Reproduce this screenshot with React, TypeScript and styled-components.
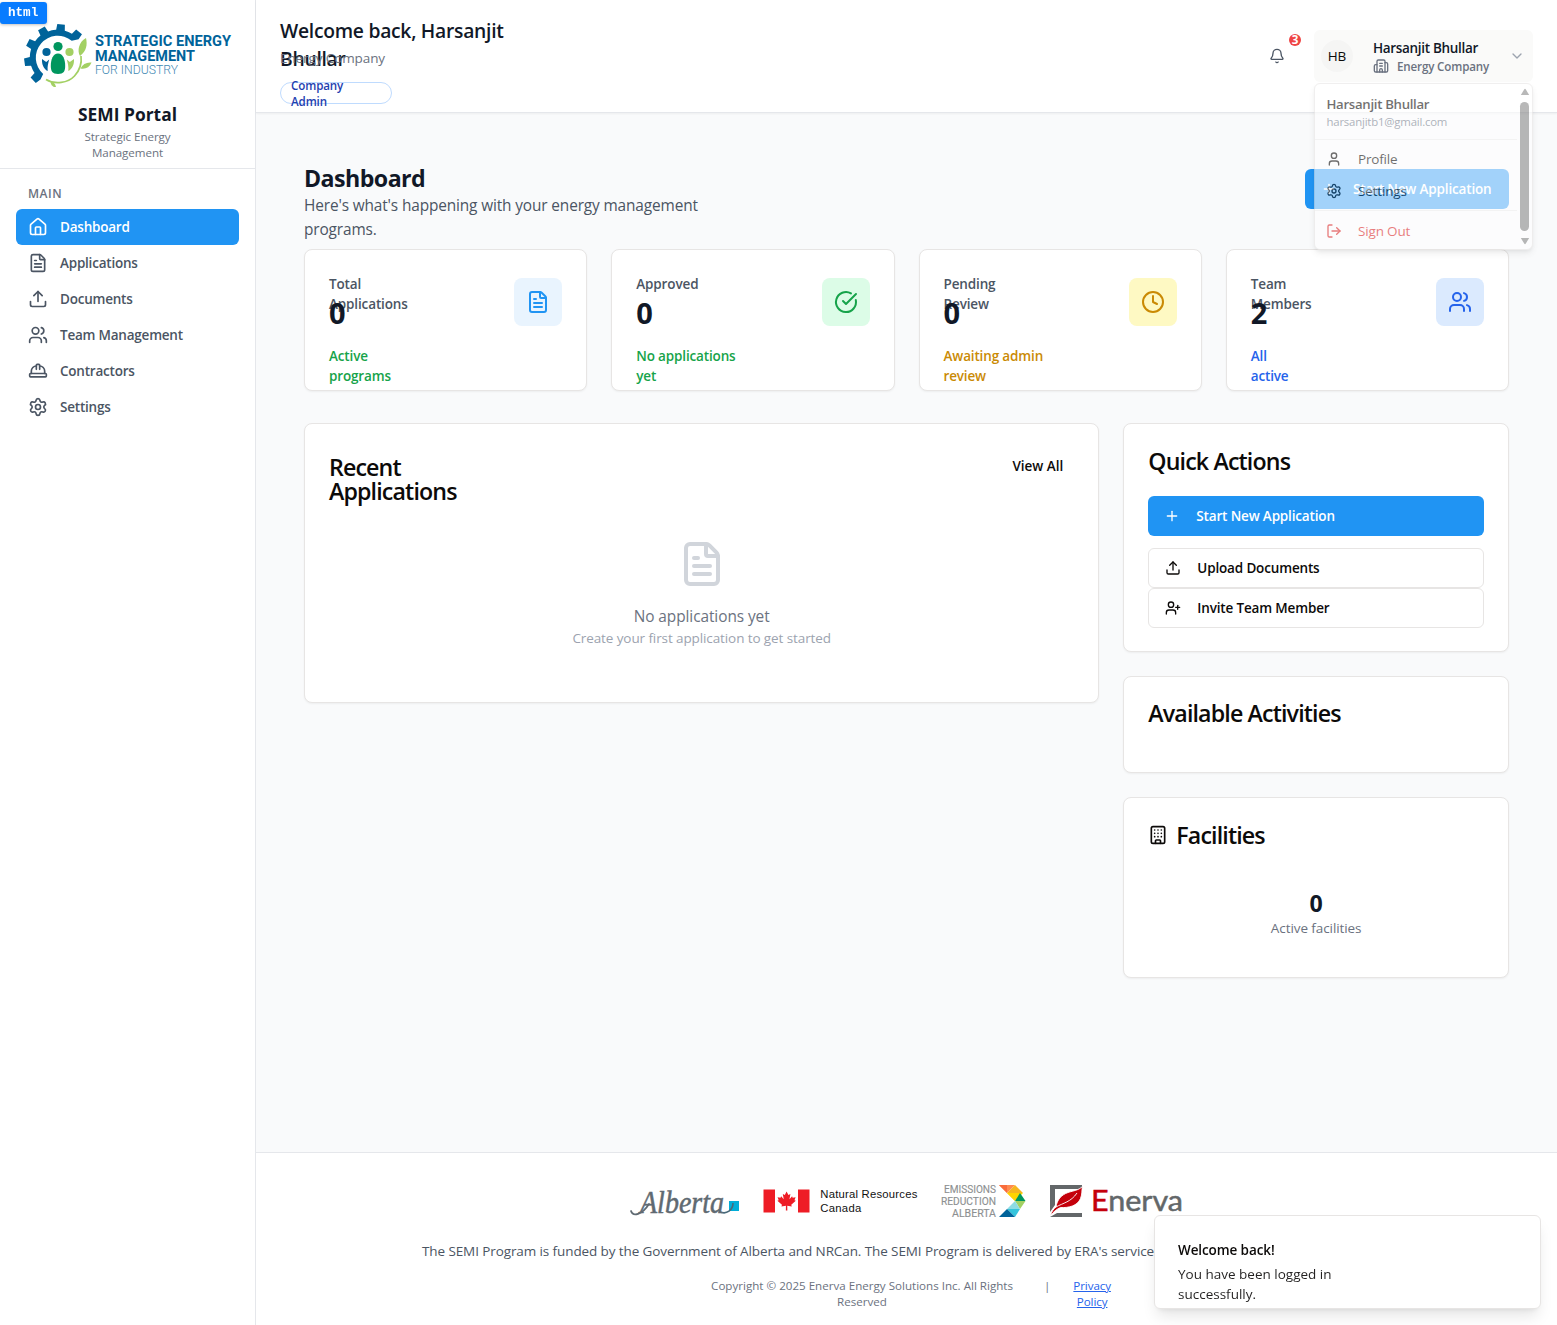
import React from "react";
import styled, { createGlobalStyle, css } from "styled-components";
import {
  Bell, Building, Building2, ChevronDown, CircleCheckBig, Clock, FileText, HardHat,
  House, LogOut, Plus, Settings, Upload, User, UserPlus, Users,
} from "lucide-react";

const sans = `"Open Sans", "Noto Sans", sans-serif`;

const type = (size: number, line: number, weight = 400, spacing = 0) => css`
  font-size: ${size}px;
  line-height: ${line}px;
  font-weight: ${weight};
  letter-spacing: ${spacing}px;
`;

const GlobalStyle = createGlobalStyle`
  *, *::before, *::after { box-sizing: border-box; }
  body { margin: 0; background: #f9fafb; font-family: ${sans}; color: #0c0a09; }
  h1, h2, h3, p { margin: 0; }
  button { font-family: inherit; border: 0; background: none; padding: 0; text-align: left; color: inherit; }
  svg { display: block; flex-shrink: 0; overflow: visible; }
`;

const Shell = styled.div`
  display: flex;
  height: 1325px;
  overflow: hidden;
`;

/* Sidebar */
const Sidebar = styled.aside`
  width: 256px;
  flex-shrink: 0;
  background: #fff;
  border-right: 1px solid #e5e7eb;
`;
const Brand = styled.div`
  height: 169px;
  padding: 22px 0 0;
  display: flex;
  flex-direction: column;
  align-items: center;
  border-bottom: 1px solid #e5e7eb;
  text-align: center;
`;
const BrandName = styled.h1`
  ${type(17.4, 28, 700)}
  color: #111827;
  margin: 10px 0 1px;
`;
const BrandSub = styled.p`
  ${type(11.6, 16, 400, -0.05)}
  color: #6b7280;
`;
const Nav = styled.nav`
  padding: 17px 16px 16px;
  display: flex;
  flex-direction: column;
`;
const NavLabel = styled.div`
  ${type(12, 16, 600, 0.5)}
  color: #6b7280;
  padding-left: 12px;
  margin-bottom: 7px;
`;
const NavItem = styled.a<{ $active?: boolean }>`
  ${type(13.5, 20, 600, -0.22)}
  display: flex;
  align-items: center;
  gap: 12px;
  height: 36px;
  padding: 0 12px;
  border-radius: 6px;
  color: ${(p) => (p.$active ? "#fff" : "#4b5563")};
  background: ${(p) => (p.$active ? "#2094f3" : "transparent")};
`;

/* Column at the right of the sidebar */
const Column = styled.div`
  flex: 1;
  min-width: 0;
  display: flex;
  flex-direction: column;
`;
const Header = styled.header`
  height: 113px;
  flex-shrink: 0;
  display: flex;
  justify-content: space-between;
  padding: 17px 24px 0;
  background: #fff;
  border-bottom: 1px solid #e5e7eb;
  box-shadow: 0 1px 2px rgba(0, 0, 0, 0.05);
`;
const Greeting = styled.h2`
  ${type(19.3, 28, 600, -0.27)}
  height: 31px;
  color: #111827;
`;
const GreetingSub = styled.p`
  ${type(13.5, 20, 400, -0.1)}
  color: #6b7280;
`;
const RoleBadge = styled.div`
  ${type(11.6, 16, 600, -0.12)}
  width: 112px;
  height: 22px;
  margin-top: 14px;
  padding: 2px 10px 0;
  display: flex;
  align-items: center;
  border: 1px solid #bfdbfe;
  border-radius: 11px;
  color: #1e40af;
`;
const HeaderRight = styled.div`
  display: flex;
  gap: 16px;
  margin-top: 13px;
`;
const BellButton = styled.button`
  position: relative;
  width: 40px;
  height: 52px;
  display: grid;
  place-items: center;
  color: #4b5563;
  margin-right: 1px;
`;
const BellCount = styled.span`
  ${type(11.6, 12, 700)}
  position: absolute;
  top: 4px;
  right: -4px;
  width: 12px;
  height: 12px;
  border-radius: 50%;
  background: #ef4444;
  color: #fff;
  text-align: center;
`;
const UserArea = styled.div`
  position: relative;
  width: 219px;
`;
const UserButton = styled.button`
  display: flex;
  align-items: center;
  width: 219px;
  height: 52px;
  padding: 0 8px 0 7px;
  border-radius: 6px;
  background: #fafaf9;
`;
const Avatar = styled.span`
  ${type(13.5, 20, 500, -0.2)}
  width: 32px;
  height: 32px;
  display: grid;
  place-items: center;
  border-radius: 50%;
  background: #f5f5f4;
`;
const UserText = styled.span`
  flex: 1;
  margin-left: 20px;
`;
const UserName = styled.span`
  ${type(13.5, 20, 600, -0.32)}
  display: block;
  color: #111827;
`;
const UserOrg = styled.span`
  ${type(11.6, 16, 600, -0.15)}
  display: flex;
  gap: 8px;
  color: #6b7280;
  & > span { padding-top: 1px; height: 16px; }
`;
const Menu = styled.div`
  position: absolute;
  z-index: 5;
  top: 53px;
  left: 0;
  width: 219px;
  height: 167px;
  display: flex;
  opacity: 0.585;
  background: #fff;
  border: 1px solid #e7e5e4;
  border-radius: 6px;
  box-shadow: 0 4px 6px -1px rgba(0, 0, 0, 0.12), 0 2px 4px -2px rgba(0, 0, 0, 0.12);
`;
const MenuBody = styled.div`
  flex: 1;
`;
const MenuHead = styled.div`
  height: 56px;
  padding: 10px 0 0 11.5px;
  border-bottom: 1px solid #f0efee;
`;
const MenuName = styled.div`
  ${type(13.2, 20, 600, -0.3)}
`;
const MenuMail = styled.div`
  ${type(11.4, 16, 500, -0.2)}
  color: #78808e;
`;
const MenuItem = styled.div<{ $danger?: boolean }>`
  ${type(13.5, 20, 400, -0.17)}
  display: flex;
  align-items: center;
  gap: 16px;
  height: 32px;
  padding-left: 11px;
  color: ${(p) => (p.$danger ? "#dc2626" : "#0c0a09")};
`;
const MenuGroup = styled.div`
  padding: 3px 0;
  & + & { border-top: 1px solid #f0efee; padding-top: 4px; }
`;
const Scrollbar = styled.div`
  width: 15px;
  padding-top: 4px;
  display: flex;
  flex-direction: column;
  align-items: center;
  gap: 6px;
`;
const ScrollThumb = styled.div`
  width: 9px;
  height: 129px;
  border-radius: 5px;
  background: #868686;
`;

/* Main content */
const Main = styled.main`
  height: 1039px;
  flex-shrink: 0;
  padding: 56px 48px 0;
`;
const TitleRow = styled.div`
  display: flex;
  justify-content: space-between;
  height: 80px;
`;
const PageTitle = styled.h1`
  ${type(23.2, 32, 700, -0.55)}
  margin-top: -7px;
  color: #111827;
`;
const PageSub = styled.p`
  ${type(15.4, 24, 400, -0.13)}
  color: #4b5563;
`;
const Action = styled.button<{ $outline?: boolean; $w?: number }>`
  ${type(13.5, 20, 600, -0.16)}
  display: flex;
  align-items: center;
  gap: 16px;
  width: ${(p) => (p.$w ? `${p.$w}px` : "100%")};
  height: 40px;
  padding: 0 0 0 16px;
  white-space: nowrap;
  border-radius: 6px;
  color: ${(p) => (p.$outline ? "#0c0a09" : "#fff")};
  background: ${(p) => (p.$outline ? "#fff" : "#2094f3")};
  border: ${(p) => (p.$outline ? "1px solid #e7e5e4" : "0")};
`;
const Stats = styled.section`
  display: grid;
  grid-template-columns: repeat(4, 1fr);
  gap: 24px;
`;
const Card = styled.section<{ $h: number }>`
  height: ${(p) => p.$h}px;
  padding: 24px;
  background: #fff;
  border: 1px solid #e7e5e4;
  border-radius: 8px;
  box-shadow: 0 1px 2px rgba(0, 0, 0, 0.05);
`;
const StatTop = styled.div`
  display: flex;
  align-items: center;
  justify-content: space-between;
  height: 56px;
  margin-bottom: 16px;
`;
const StatLabel = styled.p`
  ${type(13.5, 20, 600, -0.13)}
  height: 20px;
  color: #4b5563;
`;
const StatValue = styled.p`
  ${type(29, 36, 700)}
  padding-top: 1px;
  height: 36px;
  color: #111827;
`;
const StatNote = styled.p<{ $color: string }>`
  ${type(13.5, 20, 600, -0.15)}
  color: ${(p) => p.$color};
`;
const StatIcon = styled.div<{ $bg: string; $fg: string }>`
  width: 48px;
  height: 48px;
  display: grid;
  place-items: center;
  border-radius: 8px;
  background: ${(p) => p.$bg};
  color: ${(p) => p.$fg};
`;
const Panels = styled.div`
  display: grid;
  grid-template-columns: 795.33px 385.67px;
  gap: 24px;
  align-items: start;
  margin-top: 32px;
`;
const SideStack = styled.div`
  display: flex;
  flex-direction: column;
  gap: 24px;
`;
const CardTitle = styled.h3`
  ${type(23.2, 24, 600, -0.86)}
  display: flex;
  align-items: center;
  gap: 8px;
`;
const SideTitle = styled(CardTitle)`
  padding-top: 1px;
  height: 24px;
`;
const RecentHead = styled.div`
  display: flex;
  justify-content: space-between;
  align-items: flex-start;
  padding: 7px 11px 0 0;
  height: 92px;
`;
const ViewAll = styled.button`
  ${type(13.5, 20, 600)}
  height: 20px;
  margin-top: 1px;
`;
const Empty = styled.div`
  display: flex;
  flex-direction: column;
  align-items: center;
`;
const EmptyTitle = styled.p`
  ${type(15.4, 24, 400, -0.07)}
  color: #6b7280;
  margin: 17px 0 -1px;
`;
const EmptySub = styled.p`
  ${type(13.5, 20, 400, -0.1)}
  color: #9ca3af;
`;
const ActionList = styled.div`
  padding-top: 23.5px;
  & > :first-child { margin-bottom: 12px; }
`;
const Facility = styled.div`
  margin-top: 41px;
  text-align: center;
`;
const FacilityCount = styled.p`
  ${type(23.2, 32, 700)}
  color: #111827;
`;
const FacilityNote = styled.p`
  ${type(13.5, 20, 400, -0.08)}
  color: #6b7280;
  margin-top: -1px;
`;

/* Footer */
const Footer = styled.footer`
  flex: 1;
  padding: 31px 0 0;
  background: #fff;
  border-top: 1px solid #e5e7eb;
`;
const Logos = styled.div`
  display: flex;
  justify-content: center;
  align-items: center;
  gap: 24px;
  height: 34px;
`;
const Funding = styled.p`
  ${type(13.5, 20, 400, -0.1)}
  padding-left: 166px;
  margin-top: 23px;
  color: #4b5563;
  white-space: nowrap;
`;
const Legal = styled.div`
  ${type(11.6, 16)}
  display: flex;
  justify-content: center;
  gap: 31px;
  margin-top: 17px;
  padding-left: 9px;
  text-align: center;
  color: #6b7280;
`;
const LegalLink = styled.a`
  ${type(11.6, 16, 400, -0.1)}
  color: #2563eb;
  text-decoration: underline;
  margin-left: -8px;
`;

/* Overlays */
const Toast = styled.div`
  position: fixed;
  right: 16px;
  bottom: 16px;
  width: 387px;
  height: 94px;
  padding: 24px 23px;
  background: #fff;
  border: 1px solid #e7e5e4;
  border-radius: 6px;
  box-shadow: 0 10px 15px -3px rgba(0, 0, 0, 0.1), 0 4px 6px -4px rgba(0, 0, 0, 0.1);
`;
const ToastTitle = styled.div`
  ${type(13.5, 20, 600, -0.1)}
`;
const ToastText = styled.div`
  ${type(13.5, 20)}
  margin-top: 4px;
  opacity: 0.9;
`;
const TagChip = styled.div`
  position: fixed;
  top: 2px;
  left: 0;
  width: 47px;
  height: 22px;
  padding-left: 8px;
  border-radius: 3px;
  background: #087cff;
  color: #fff;
  font: 700 12.6px/23px "Liberation Mono", monospace;
  box-shadow: 0 1px 3px rgba(0, 0, 0, 0.25);
`;

const rad = (deg: number) => (deg * Math.PI) / 180;
const polar = (r: number, deg: number) =>
  `${(33.6 + r * Math.cos(rad(deg))).toFixed(2)} ${(35.5 + r * Math.sin(rad(deg))).toFixed(2)}`;

/* Open gear: six teeth over the upper left part of the ring */
const gearPath = () => {
  const teeth = [-223, -188, -153, -119, -84, -50];
  let d = `M${polar(22, -229)}`;
  teeth.forEach((t) => {
    d += ` L${polar(27.8, t - 9)} L${polar(33.6, t - 6.5)} L${polar(33.6, t + 6.5)} L${polar(27.8, t + 9)}`;
    if (t !== -50) d += ` A27.8 27.8 0 0 1 ${polar(27.8, t + 25)}`;
  });
  return `${d} L${polar(22, -50)} A22 22 0 0 0 ${polar(22, -229)} Z`;
};

const SemiLogo = () => (
  <svg width="208" height="68" viewBox="0 0 208 68" fontFamily='Roboto, "Open Sans", sans-serif'>
    <path d={gearPath()} fill="#00639a" />
    <circle cx="22.5" cy="30" r="4.1" fill="#00639a" />
    <path d="M18 37l4.2 3 3-2.5c-1 4-2 7-1.5 11.5-4-2-6-6.5-5.7-12z" fill="#00639a" />
    <circle cx="45.5" cy="30" r="4.1" fill="#a3d063" />
    <path d="M50 37l-4.2 3-3-2.5c1 4 2 7 1.5 11.5 4-2 6-6.5 5.7-12z" fill="#a3d063" />
    <circle cx="34" cy="24.5" r="4.6" fill="#00965e" />
    <path d="M34 31.5c5 0 7.2 6 7.2 12.5 0 5-1.5 8-7.2 8s-7.2-3-7.2-8c0-6.500 2.200-12.500 7.200-12.500z" fill="#00965e" />
    <path d="M22 57.500c9 5.500 22 3.500 28.500-3.500 5-5.500 7.500-12.500 6.500-20" fill="none" stroke="#a3d063" strokeWidth="1.700" />
    <path d="M62 16c1.500 7 .5 13-6 18-3-5-1.500-14 6-18z" fill="#a3d063" />
    <path d="M67.500 40.500c-2 5-6 7-11 6 2-4.500 6-6.500 11-6z" fill="#a3d063" />
    <path d="M26.500 59c2.500.5 5 2.500 5.500 6-3 .5-5.500-2-5.500-6z" fill="#a3d063" />
    <g fill="#00639a" fontWeight="700" fontSize="14.700">
      <text x="71" y="24.200" textLength="136" lengthAdjust="spacingAndGlyphs">STRATEGIC ENERGY</text>
      <text x="71" y="38.800" textLength="100" lengthAdjust="spacingAndGlyphs">MANAGEMENT</text>
    </g>
    <text x="71" y="51.800" fill="#3f89b3" fontWeight="300" fontSize="12.300" textLength="83" lengthAdjust="spacingAndGlyphs">FOR INDUSTRY</text>
  </svg>
);

const AlbertaLogo = () => (
  <svg width="110" height="34" viewBox="0 0 110 34">
    <rect x="100" y="17" width="10" height="10" fill="#00add8" />
    <path d="M2 27c2 6 11 4 18-7" fill="none" stroke="#5f6a72" strokeWidth="1.800" strokeLinecap="round" />
    <path d="M90 27.500c8 4 14-2 14-8.500" fill="none" stroke="#47697a" strokeWidth="1.600" />
    <text x="11" y="29" fill="#5f6a72" stroke="#5f6a72" strokeWidth=".5" fontFamily='"Liberation Serif", serif' fontStyle="italic" fontSize="31" textLength="84" lengthAdjust="spacingAndGlyphs">Alberta</text>
  </svg>
);

const leaf = "M0-10.500l1.900 3.600 2.100-1-1 5.400 2.800-2.900.6 1.500 3.100-.6-1.200 3.100 1.400.7-4.800 4 .5 1.900-4.700-.7.1 5.100h-1.600l.1-5.100-4.700.7.5-1.900-4.800-4 1.400-.7-1.200-3.100 3.100.6.6-1.500 2.800 2.900-1-5.400 2.100 1z";
const CanadaLogo = () => (
  <svg width="154" height="34" viewBox="0 0 154 34">
    <path d="M.5 5.500H12v23H.5zM35 5.500h11.500v23H35z" fill="#ee1c25" />
    <path d={leaf} transform="translate(23.6 17.500) scale(.95)" fill="#ee1c25" />
    <g fill="#111" fontFamily='"Liberation Sans", Arial, sans-serif' fontSize="11.300">
      <text x="57.300" y="14" textLength="97">Natural Resources</text>
      <text x="57.300" y="28" textLength="41">Canada</text>
    </g>
  </svg>
);

const EraLogo = () => (
  <svg width="85" height="34" viewBox="0 0 85 34">
    <g fill="#8d9091" stroke="#8d9091" strokeWidth=".15" fontFamily="Roboto, sans-serif" fontSize="11.500">
      <text x="3" y="9.300" textLength="52" lengthAdjust="spacingAndGlyphs">EMISSIONS</text>
      <text x="0" y="21" textLength="55" lengthAdjust="spacingAndGlyphs">REDUCTION</text>
      <text x="11" y="32.700" textLength="44" lengthAdjust="spacingAndGlyphs">ALBERTA</text>
    </g>
    <path d="M58 1h16l-8 8z" fill="#ff8a50" />
    <path d="M58 1h8v8z" fill="#f96c3c" />
    <path d="M74 1l-8 8h16z" fill="#f6b51e" />
    <path d="M66 9h8v8z" fill="#ffcb05" />
    <path d="M66 9h16l-8 8z" fill="#ffd400" />
    <path d="M79 9l5.500 8H74z" fill="#00965e" />
    <path d="M74 17h10.500L79 25z" fill="#a3d063" />
    <path d="M74 17l5 8H66z" fill="#8edbe3" />
    <path d="M66 25h13l-5 8z" fill="#35c4dc" />
    <path d="M66 25l8 8H58z" fill="#00639a" />
  </svg>
);

const EnervaLogo = () => (
  <svg width="134" height="34" viewBox="0 0 134 34">
    <path d="M0 1h32v4H5v16l-5 7zM7 29h25v4H0z" fill="#636769" />
    <path d="M32.500 2.500c-1 4 0 7-2 12-3 7.500-12 9.500-20 9-4 1.500-7 4.500-10 8 1-4 3-6.500 5.500-8.500 1-7 5-12 12-14.500 6-2 10-2 14.500-6z" fill="#c4000b" stroke="#fff" strokeWidth=".9" />
    <path d="M6 23C13 19 21 18 27 9" fill="none" stroke="#fff" strokeWidth=".9" />
    <text x="41" y="27" fill="#636769" stroke="#636769" strokeWidth=".5" fontFamily="Lato, sans-serif" fontSize="28.500" textLength="92" lengthAdjust="spacingAndGlyphs">
      <tspan fill="#c4000b" stroke="#c4000b">E</tspan>nerva
    </text>
  </svg>
);

const ScrollArrow = ({ down }: { down?: boolean }) => (
  <svg width="10" height="8" viewBox="0 0 10 8">
    <path d={down ? "M.8 1h8.400L5.800 6.600a1 1 0 0 1-1.600 0z" : "M.8 7h8.400L5.800 1.400a1 1 0 0 0-1.600 0z"} fill="#868686" />
  </svg>
);

const navItems = [
  { label: "Dashboard", Icon: House, active: true },
  { label: "Applications", Icon: FileText },
  { label: "Documents", Icon: Upload },
  { label: "Team Management", Icon: Users },
  { label: "Contractors", Icon: HardHat },
  { label: "Settings", Icon: Settings },
];

const stats = [
  { label: ["Total", "Applications"], value: 0, note: ["Active", "programs"], color: "#16a34a", bg: "#e9f4fe", fg: "#2094f3", Icon: FileText },
  { label: ["Approved"], value: 0, note: ["No applications", "yet"], color: "#16a34a", bg: "#dcfce7", fg: "#16a34a", Icon: CircleCheckBig },
  { label: ["Pending", "Review"], value: 0, note: ["Awaiting admin", "review"], color: "#ca8a04", bg: "#fef9c3", fg: "#ca8a04", Icon: Clock },
  { label: ["Team", "Members"], value: 2, note: ["All", "active"], color: "#2563eb", bg: "#dbeafe", fg: "#2563eb", Icon: Users },
];

const Lines = ({ of }: { of: string[] }) => (
  <>
    {of.map((line, i) => (
      <React.Fragment key={line}>
        {i > 0 && <br />}
        {line}
      </React.Fragment>
    ))}
  </>
);

export default function App() {
  return (
    <>
      <GlobalStyle />
      <Shell>
        <Sidebar>
          <Brand>
            <SemiLogo />
            <BrandName>SEMI Portal</BrandName>
            <BrandSub>Strategic Energy<br />Management</BrandSub>
          </Brand>
          <Nav>
            <NavLabel>MAIN</NavLabel>
            {navItems.map(({ label, Icon, active }) => (
              <NavItem key={label} $active={active}>
                <Icon size={20} />
                {label}
              </NavItem>
            ))}
          </Nav>
        </Sidebar>
        <Column>
          <Header>
            <div>
              <Greeting>Welcome back, Harsanjit<br />Bhullar</Greeting>
              <GreetingSub>Energy Company</GreetingSub>
              <RoleBadge><span>Company<br />Admin</span></RoleBadge>
            </div>
            <HeaderRight>
              <BellButton>
                <Bell size={16} />
                <BellCount>3</BellCount>
              </BellButton>
              <UserArea>
                <UserButton>
                  <Avatar>HB</Avatar>
                  <UserText>
                    <UserName>Harsanjit Bhullar</UserName>
                    <UserOrg><Building2 size={16} /><span>Energy Company</span></UserOrg>
                  </UserText>
                  <ChevronDown size={16} color="#9ca3af" />
                </UserButton>
                <Menu>
                  <MenuBody>
                    <MenuHead>
                      <MenuName>Harsanjit Bhullar</MenuName>
                      <MenuMail>harsanjitb1@gmail.com</MenuMail>
                    </MenuHead>
                    <MenuGroup>
                      <MenuItem><User size={16} />Profile</MenuItem>
                      <MenuItem><Settings size={16} />Settings</MenuItem>
                    </MenuGroup>
                    <MenuGroup>
                      <MenuItem $danger><LogOut size={16} />Sign Out</MenuItem>
                    </MenuGroup>
                  </MenuBody>
                  <Scrollbar>
                    <ScrollArrow />
                    <ScrollThumb />
                    <ScrollArrow down />
                  </Scrollbar>
                </Menu>
              </UserArea>
            </HeaderRight>
          </Header>
          <Main>
            <TitleRow>
              <div>
                <PageTitle>Dashboard</PageTitle>
                <PageSub>Here's what's happening with your energy management<br />programs.</PageSub>
              </div>
              <Action $w={204}><Plus size={16} />Start New Application</Action>
            </TitleRow>
            <Stats>
              {stats.map(({ label, value, note, color, bg, fg, Icon }) => (
                <Card key={label[0]} $h={142}>
                  <StatTop>
                    <div>
                      <StatLabel><Lines of={label} /></StatLabel>
                      <StatValue>{value}</StatValue>
                    </div>
                    <StatIcon $bg={bg} $fg={fg}><Icon size={24} /></StatIcon>
                  </StatTop>
                  <StatNote $color={color}><Lines of={note} /></StatNote>
                </Card>
              ))}
            </Stats>
            <Panels>
              <Card $h={280}>
                <RecentHead>
                  <CardTitle>Recent<br />Applications</CardTitle>
                  <ViewAll>View All</ViewAll>
                </RecentHead>
                <Empty>
                  <FileText size={48} color="#d1d5db" />
                  <EmptyTitle>No applications yet</EmptyTitle>
                  <EmptySub>Create your first application to get started</EmptySub>
                </Empty>
              </Card>
              <SideStack>
                <Card $h={228.5}>
                  <SideTitle>Quick Actions</SideTitle>
                  <ActionList>
                    <Action><Plus size={16} />Start New Application</Action>
                    <Action $outline><Upload size={16} />Upload Documents</Action>
                    <Action $outline><UserPlus size={16} />Invite Team Member</Action>
                  </ActionList>
                </Card>
                <Card $h={97.5}>
                  <SideTitle>Available Activities</SideTitle>
                </Card>
                <Card $h={181}>
                  <SideTitle><Building size={20} />Facilities</SideTitle>
                  <Facility>
                    <FacilityCount>0</FacilityCount>
                    <FacilityNote>Active facilities</FacilityNote>
                  </Facility>
                </Card>
              </SideStack>
            </Panels>
          </Main>
          <Footer>
            <Logos>
              <AlbertaLogo />
              <CanadaLogo />
              <EraLogo />
              <EnervaLogo />
            </Logos>
            <Funding>The SEMI Program is funded by the Government of Alberta and NRCan. The SEMI Program is delivered by ERA's service</Funding>
            <Legal>
              <span>Copyright © 2025 Enerva Energy Solutions Inc. All Rights<br />Reserved</span>
              <span>|</span>
              <LegalLink>Privacy<br />Policy</LegalLink>
            </Legal>
          </Footer>
        </Column>
      </Shell>
      <Toast>
        <ToastTitle>Welcome back!</ToastTitle>
        <ToastText>You have been logged in<br />successfully.</ToastText>
      </Toast>
      <TagChip>html</TagChip>
    </>
  );
}
